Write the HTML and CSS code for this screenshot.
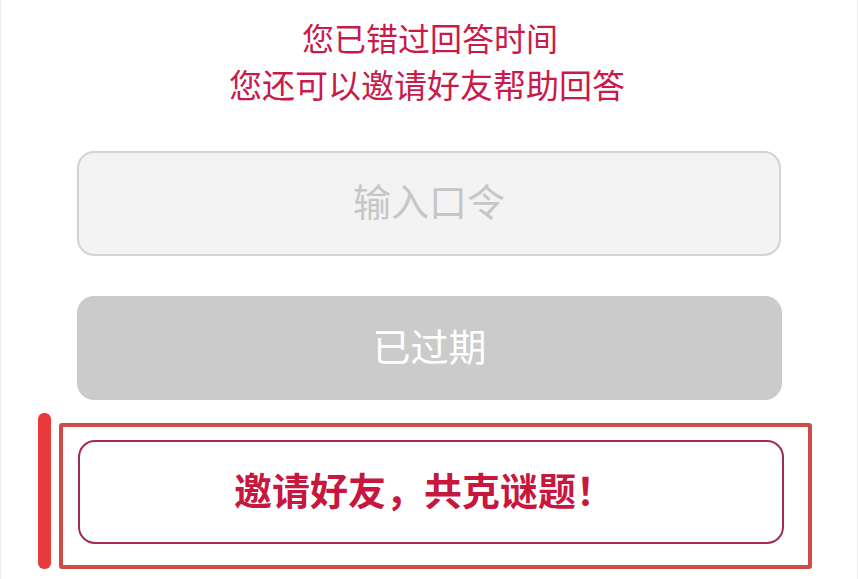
FILE: index.html
```html
<!doctype html>
<html lang="zh-CN">
	<head>
		<meta charset="utf-8">
		<title>邀请好友</title>
		<link rel="stylesheet" href="styles.css">
	</head>
	<body>
		<div class="page">
			<div class="tips">
				<div class="tip tip-first">您已错过回答时间</div>
				<div class="tip tip-second">您还可以邀请好友帮助回答</div>
			</div>

			<div class="field"><span class="placeholder">输入口令</span></div>

			<div class="btn btn-expired">已过期</div>

			<div class="mark-row">
				<div class="mark-bar"></div>
				<div class="mark-box">
					<div class="btn btn-invite">邀请好友，共克谜题！</div>
				</div>
			</div>
		</div>
	</body>
</html>
```

FILE: styles.css
```css
html, body { margin: 0; padding: 0; background: #fff; }
body {
	font-family: "Noto Sans CJK SC", "Noto Sans", sans-serif;
	width: 858px;
	height: 579px;
	overflow: hidden;
}

.page {
	box-sizing: border-box;
	height: 579px;
	border-left: 1px solid #ececec;
	border-right: 1px solid #ececec;
	padding: 14px 0 0 0;
}

/* red hint text on top */
.tips { text-align: center; color: #c81b4b; height: 96px; }
.tip { line-height: 47px; }
.tip-first { font-size: 32px; padding-left: 2px; }
.tip-second { font-size: 33px; margin-left: -4px; }

.field {
	box-sizing: border-box;
	width: 704px;
	height: 105px;
	margin: 41px 0 0 76px;
	padding-bottom: 9px;
	border: 2px solid #d3d3d3;
	border-radius: 17px;
	background: #f3f3f3;
	display: flex;
	align-items: center;
	justify-content: center;
}
.placeholder { color: #c6c6c6; font-size: 38px; }

.btn {
	box-sizing: border-box;
	height: 104px;
	padding-bottom: 8px;
	display: flex;
	align-items: center;
	justify-content: center;
	border-radius: 17px;
}
.btn-expired {
	width: 705px;
	margin: 40px 0 0 76px;
	background: #cbcbcb;
	color: #fff;
	font-size: 38px;
}

/* annotation frame around the invite button */
.mark-row {
	display: flex;
	margin-top: 13px;
	margin-left: 37px;
}
.mark-bar {
	width: 13px;
	height: 156px;
	border-radius: 6px;
	background: #e83a3b;
}
.mark-box {
	box-sizing: border-box;
	width: 753px;
	height: 146px;
	margin: 10px 0 0 8px;
	border: 4px solid #cf4b45;
	border-radius: 3px;
	padding: 13px 0 0 15px;
}
.btn-invite {
	width: 706px;
	padding-right: 14px;
	border: 2px solid #a22a55;
	background: #fff;
	color: #c8173f;
	font-size: 38px;
	font-weight: bold;
}
```
